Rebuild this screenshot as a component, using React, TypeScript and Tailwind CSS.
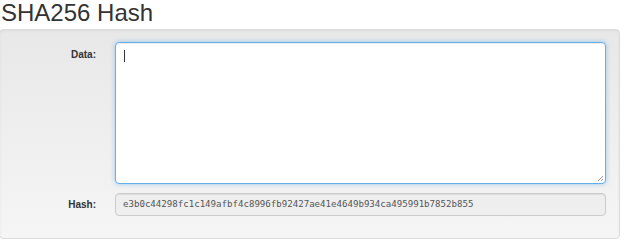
export default function App() {
  return (
    <div className="w-[624px] h-[242px] bg-white overflow-hidden" style={{ fontFamily: '"Liberation Sans", Arial, sans-serif' }}>
      <h2 className="text-[24px] leading-[26px] text-[#333] pl-[1px] h-[29px] m-0 font-normal">SHA256 Hash</h2>
      <div className="w-[621px] h-[210px] ml-[-1px] rounded-[4px] border border-[#dcdcdc] bg-gradient-to-b from-[#e8e8e8] to-[#f5f5f5] shadow-[inset_0_1px_3px_rgba(0,0,0,0.05)] pt-[12px] flex flex-col gap-[9px]">
        <div className="flex items-start">
          <label className="w-[98px] pr-[2px] text-right text-[10px] font-bold text-[#333] pt-[5px]">Data:</label>
          <div className="ml-[17px] w-[491px] h-[142px] bg-white border border-[#66afe9] rounded-[4px] shadow-[inset_0_1px_1px_rgba(0,0,0,0.075),0_0_5px_rgba(102,175,233,0.6)] relative">
            <div className="absolute left-[8px] top-[7px] w-[1px] h-[12px] bg-[#333]" />
            <svg className="absolute right-[1px] bottom-[1px]" width="7" height="7" viewBox="0 0 7 7">
              <line x1="6" y1="1" x2="1" y2="6" stroke="#999" strokeWidth="1" />
              <line x1="6" y1="4" x2="4" y2="6" stroke="#999" strokeWidth="1" />
            </svg>
          </div>
        </div>
        <div className="flex items-center">
          <label className="w-[98px] pr-[2px] text-right text-[10px] font-bold text-[#333]">Hash:</label>
          <div className="ml-[17px] w-[491px] h-[23px] bg-[#eee] border border-[#ccc] rounded-[4px] shadow-[inset_0_1px_1px_rgba(0,0,0,0.075)] flex items-center px-[7px] text-[9.1px] text-[#555]" style={{ fontFamily: '"DejaVu Sans Mono", "Liberation Mono", monospace' }}>
            e3b0c44298fc1c149afbf4c8996fb92427ae41e4649b934ca495991b7852b855
          </div>
        </div>
      </div>
    </div>
  );
}
